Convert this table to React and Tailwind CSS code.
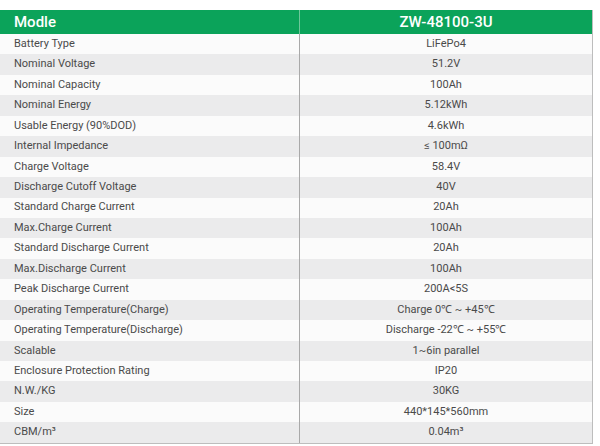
const rows = [
  ["Battery Type", "LiFePo4"],
  ["Nominal Voltage", "51.2V"],
  ["Nominal Capacity", "100Ah"],
  ["Nominal Energy", "5.12kWh"],
  ["Usable Energy (90%DOD)", "4.6kWh"],
  ["Internal Impedance", "≤ 100mΩ"],
  ["Charge Voltage", "58.4V"],
  ["Discharge Cutoff Voltage", "40V"],
  ["Standard Charge Current", "20Ah"],
  ["Max.Charge Current", "100Ah"],
  ["Standard Discharge Current", "20Ah"],
  ["Max.Discharge Current", "100Ah"],
  ["Peak Discharge Current", "200A<5S"],
  ["Operating Temperature(Charge)", "Charge 0℃ ~ +45℃"],
  ["Operating Temperature(Discharge)", "Discharge -22℃ ~ +55℃"],
  ["Scalable", "1~6in parallel"],
  ["Enclosure Protection Rating", "IP20"],
  ["N.W./KG", "30KG"],
  ["Size", "440*145*560mm"],
  ["CBM/m³", "0.04m³"],
];

export default function App() {
  return (
    <div className="w-[600px] h-[446px] bg-white pt-[10px]" style={{ fontFamily: "Roboto, 'Open Sans', sans-serif" }}>
      <div className="w-[593px] border-r border-b border-[#bdbdbd]">
        <div className="flex h-[24px] bg-[#0ba35a] text-white">
          <div className="w-[300px] border-r border-[#6fc79a] pl-[14px] flex items-center text-[15px] font-medium">Modle</div>
          <div className="flex-1 flex items-center justify-center text-[15px] font-medium">ZW-48100-3U</div>
        </div>
        {rows.map(([label, value], i) => (
          <div
            key={label}
            className={`flex h-[20.45px] items-center text-[11px] text-[#4a4a4a] ${i % 2 === 0 ? "bg-[#fbfbfb]" : "bg-[#ebebec]"}`}
          >
            <div className="w-[300px] h-full border-r border-[#a9a9a9] pl-[14px] flex items-center">{label}</div>
            <div className="flex-1 h-full flex items-center justify-center">{value}</div>
          </div>
        ))}
      </div>
    </div>
  );
}
